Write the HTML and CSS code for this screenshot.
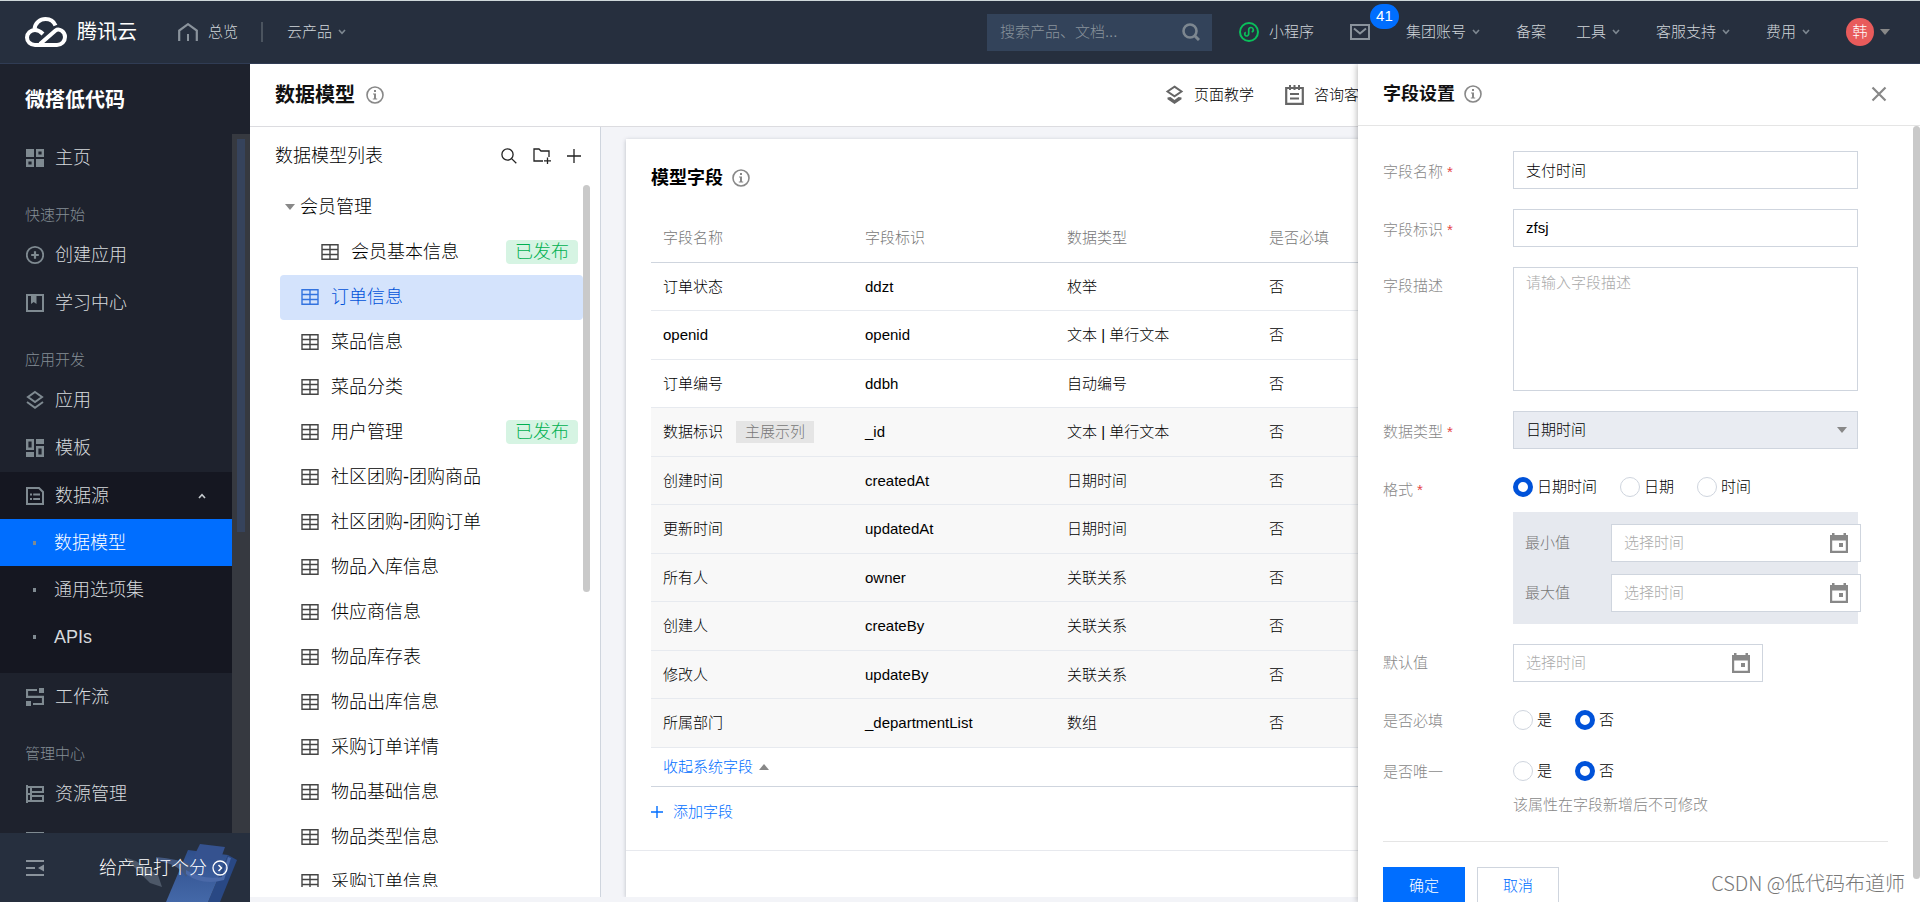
FILE: index.html
```html
<!DOCTYPE html>
<html lang="zh-CN">
<head>
<meta charset="utf-8">
<title>数据模型</title>
<link rel="stylesheet" href="styles.css">
</head>
<body>
<svg class="sprite" aria-hidden="true">
  <symbol id="i-table" viewBox="0 0 18 16"><path d="M1 .8h16v14.4H1zM1 5.5h16M1 10.5h16M9 .8v14.4" fill="none" stroke="currentColor" stroke-width="1.4"/></symbol>
  <symbol id="i-info" viewBox="0 0 18 18"><circle cx="9" cy="9" r="8" fill="none" stroke="currentColor" stroke-width="1.6"/><path d="M8 4h2v2H8zM7 7.4h3v5h1.2v1.2H6.8v-1.2H8V8.6H7z" fill="currentColor"/></symbol>
  <symbol id="i-chev" viewBox="0 0 8 6"><path d="M1 1l3 3.4L7 1" fill="none" stroke="currentColor" stroke-width="1.6"/></symbol>
  <symbol id="i-calendar" viewBox="0 0 18 20"><path d="M0 2h2V0h2.500v2h9V0H16v2h2v18H0zM2.200 7.500v10.300h13.600V7.500z" fill="currentColor" fill-rule="evenodd"/><path d="M9 10h4v4H9z" fill="currentColor"/></symbol>
  <symbol id="i-layers" viewBox="0 0 18 20"><path d="M9 2l7 5-7 5-7-5z" fill="none" stroke="currentColor" stroke-width="2"/><path d="M1 12l8 5.800L17 12" fill="none" stroke="currentColor" stroke-width="2"/></symbol>
</svg>

<div class="app">
  <header class="topbar">
    <a class="brand" href="#">
      <svg class="brand-mark" viewBox="0 0 42 30" aria-hidden="true"><g fill="none" stroke="#fff" stroke-width="4"><path d="M15 27l15.500-13.500C34 10.800 40 14.500 40 20c0 4.500-3.500 8-8 8H10c-4.500 0-8-3.300-8-7.500S5.500 13 10 13c3 0 5 1 8 4"/><path d="M9.500 12C10 6 15 2 20.500 2c5 0 8.500 2.800 10 6.500"/></g></svg>
      <span>腾讯云</span>
    </a>
    <a class="top-home" href="#">
      <svg width="20" height="18" viewBox="0 0 20 18" aria-hidden="true"><path d="M1.200 18V7.500L10 1.200l8.800 6.300V18" fill="none" stroke="#8a939c" stroke-width="2.200"/><path d="M9 11h2v7H9z" fill="#8a939c"/></svg>
      <span>总览</span>
    </a>
    <span class="top-rule"></span>
    <button class="top-link" type="button">云产品<svg class="chev"><use href="#i-chev"/></svg></button>
    <form class="search">
      <input type="text" placeholder="搜索产品、文档..." aria-label="搜索产品、文档">
      <button type="button" aria-label="搜索"><svg width="18" height="18" viewBox="0 0 18 18"><circle cx="8" cy="8" r="6.500" fill="none" stroke="currentColor" stroke-width="2.600"/><path d="M12.500 12.500L17 17" stroke="currentColor" stroke-width="3"/></svg></button>
    </form>
    <a class="top-link top-mini" href="#">
      <svg width="20" height="20" viewBox="0 0 20 20" aria-hidden="true"><circle cx="10" cy="10" r="9" fill="none" stroke="#0abf5b" stroke-width="2"/><path d="M6.800 10.200a2 2 0 1 0 2.900 2V7.800a2.300 2.300 0 1 1 3 2.200" fill="none" stroke="#0abf5b" stroke-width="1.700"/></svg>
      <span>小程序</span>
    </a>
    <a class="top-link mail" href="#" aria-label="消息">
      <svg width="20" height="16" viewBox="0 0 20 16" aria-hidden="true"><path d="M1 1h18v14H1z" fill="none" stroke="#8a939c" stroke-width="2"/><path d="M4 4.500l6 5 6-5" fill="none" stroke="#8a939c" stroke-width="2"/></svg>
      <span class="mail-badge">41</span>
    </a>
    <button class="top-link" type="button">集团账号<svg class="chev"><use href="#i-chev"/></svg></button>
    <a class="top-link" href="#">备案</a>
    <button class="top-link top-tools" type="button">工具<svg class="chev"><use href="#i-chev"/></svg></button>
    <button class="top-link" type="button">客服支持<svg class="chev"><use href="#i-chev"/></svg></button>
    <button class="top-link" type="button">费用<svg class="chev"><use href="#i-chev"/></svg></button>
    <button class="top-link account" type="button"><span class="avatar">韩</span><span class="tri-down"></span></button>
  </header>

  <aside class="sidebar">
    <h2 class="side-title">微搭低代码</h2>
    <div class="side-scroll">
      <nav class="side-nav">
        <a class="side-item" href="#"><svg viewBox="0 0 18 18"><path d="M0 0h8v8H0zM10 10h8v8h-8z" fill="currentColor"/><path d="M11.200 1.200h5.600v5.600h-5.600zM1.200 11.200h5.600v5.600H1.200z" fill="none" stroke="currentColor" stroke-width="2.400"/></svg>主页</a>
        <h3 class="side-label">快速开始</h3>
        <a class="side-item" href="#"><svg viewBox="0 0 18 18"><circle cx="9" cy="9" r="8.200" fill="none" stroke="currentColor" stroke-width="1.800"/><path d="M9 5.200v7.600M5.200 9h7.600" stroke="currentColor" stroke-width="2.200"/></svg>创建应用</a>
        <a class="side-item" href="#"><svg viewBox="0 0 18 18"><path d="M1 1h16v16H1z" fill="none" stroke="currentColor" stroke-width="2"/><path d="M5 2h5.500v8L7.700 8 5 10z" fill="currentColor"/></svg>学习中心</a>
        <h3 class="side-label">应用开发</h3>
        <a class="side-item" href="#"><svg viewBox="0 0 18 20"><use href="#i-layers"/></svg>应用</a>
        <a class="side-item" href="#"><svg viewBox="0 0 18 18"><path d="M10 0h8v5h-8zM0 13h8v5H0z" fill="currentColor"/><path d="M1.200 1.200h5.600v8.600H1.200zM11.200 8.200h5.600v8.600h-5.600z" fill="none" stroke="currentColor" stroke-width="2.400"/></svg>模板</a>
        <div class="side-group">
          <button class="side-item" type="button"><svg viewBox="0 0 18 18"><path d="M1 1h12l4 4v12H1z" fill="none" stroke="currentColor" stroke-width="2"/><path d="M4 6.500h2v2H4zM7.200 6.500H14v2H7.200zM4 11h2v2H4zM7.200 11H14v2H7.200z" fill="currentColor"/></svg>数据源<svg class="chev chev-up"><use href="#i-chev"/></svg></button>
          <a class="sub-item current" href="#">数据模型</a>
          <a class="sub-item" href="#">通用选项集</a>
          <a class="sub-item" href="#">APIs</a>
        </div>
        <a class="side-item" href="#"><svg viewBox="0 0 18 18"><path d="M13 0h5v5h-5zM0 13h5v5H0z" fill="currentColor"/><path d="M11 2H1v6.800h16V16H7" fill="none" stroke="currentColor" stroke-width="2.200"/></svg>工作流</a>
        <h3 class="side-label">管理中心</h3>
        <a class="side-item" href="#"><svg viewBox="0 0 18 18"><path d="M1 0v18M1 2h5M1 9h5M1 16h5M5 2h12v5H5zM5 11h12v5H5z" fill="none" stroke="currentColor" stroke-width="2"/></svg>资源管理</a>
        <a class="side-item" href="#" aria-label="更多"><svg viewBox="0 0 18 18"><path d="M0 0h18v18H0z" fill="none" stroke="currentColor" stroke-width="3"/></svg></a>
      </nav>
      <div class="side-bar"><div class="side-thumb"></div></div>
    </div>
    <div class="side-foot">
      <button class="collapse" type="button" aria-label="收起菜单"><svg width="18" height="16" viewBox="0 0 18 16"><path d="M0 1h18M0 8h9M0 15h18" stroke="currentColor" stroke-width="2"/><path d="M18 4.500v7L12 8z" fill="currentColor"/></svg></button>
      <a class="rate" href="#"><span>给产品打个分</span><svg width="16" height="16" viewBox="0 0 16 16" aria-hidden="true"><circle cx="8" cy="8" r="7" fill="none" stroke="#fff" stroke-width="1.300"/><path d="M6.500 5l3 3-3 3" fill="none" stroke="#fff" stroke-width="1.500"/></svg></a>
      <svg class="foot-art" viewBox="0 0 120 58" aria-hidden="true">
        <defs><linearGradient id="board" x1="0" y1="0" x2="0" y2="1"><stop offset="0" stop-color="#2f4f8c"/><stop offset="1" stop-color="#4468a8"/></linearGradient></defs>
        <path d="M3 14l9 3 22 14 4 12-12-4L8 21z" fill="#4d5868"/>
        <path d="M104 11l9 5-17 42H84z" fill="#294884"/>
        <path d="M64 6l40 5-20 47H42z" fill="url(#board)"/>
        <path d="M32 13q22 2 36 8l-6 12q-8-14-30-16z" fill="#43587f"/>
        <path d="M62 26q16 10 36 7l6-20 3 1-7 22q-22 6-38-6z" fill="#4a69a8"/>
        <path d="M76 0l25 3-5 14-27-3z" fill="#35528f"/>
      </svg>
    </div>
  </aside>

  <main class="main">
    <header class="page-head">
      <h1>数据模型</h1>
      <svg class="info"><use href="#i-info"/></svg>
      <nav class="page-links">
        <a href="#"><svg width="19" height="20" viewBox="0 0 18 20" aria-hidden="true"><path d="M9 1.600l7 4.900-7 4.900-7-4.900z" fill="none" stroke="currentColor" stroke-width="2"/><path d="M2 12.500l3-.5 4 3 4-3 3 .5v1.700L9 19l-7-4.800z" fill="currentColor"/></svg>页面教学</a>
        <a href="#"><svg width="19" height="20" viewBox="0 0 19 20" aria-hidden="true"><path d="M1.200 3h16.600v15.800H1.200z" fill="none" stroke="currentColor" stroke-width="2.200"/><path d="M5 0v5M9.500 0v5M14 0v5M5 9h9M5 13.500h9" stroke="currentColor" stroke-width="2"/></svg>咨询客服</a>
      </nav>
    </header>

    <div class="workspace">
      <section class="models">
        <header class="models-head">
          <h2>数据模型列表</h2>
          <button type="button" aria-label="搜索模型"><svg width="16" height="16" viewBox="0 0 16 16"><circle cx="6.500" cy="6.500" r="5.600" fill="none" stroke="currentColor" stroke-width="1.300"/><path d="M10.600 10.600L15.300 15.300" stroke="currentColor" stroke-width="1.300"/></svg></button>
          <button type="button" aria-label="新建文件夹"><svg width="18" height="16" viewBox="0 0 18 16"><path d="M10 13H1V1h5l2 2h8v6M11 12.800h7M14.500 9.500V16" fill="none" stroke="currentColor" stroke-width="1.300"/></svg></button>
          <button type="button" aria-label="新建模型"><svg width="14" height="14" viewBox="0 0 14 14"><path d="M7 0v14M0 7h14" stroke="currentColor" stroke-width="1.300"/></svg></button>
        </header>
        <div class="tree-wrap">
          <ul class="tree">
            <li class="folder"><span class="tri-down"></span>会员管理</li>
            <li class="nested"><svg><use href="#i-table"/></svg>会员基本信息<span class="tag">已发布</span></li>
            <li class="selected"><svg><use href="#i-table"/></svg>订单信息</li>
            <li><svg><use href="#i-table"/></svg>菜品信息</li>
            <li><svg><use href="#i-table"/></svg>菜品分类</li>
            <li><svg><use href="#i-table"/></svg>用户管理<span class="tag">已发布</span></li>
            <li><svg><use href="#i-table"/></svg>社区团购-团购商品</li>
            <li><svg><use href="#i-table"/></svg>社区团购-团购订单</li>
            <li><svg><use href="#i-table"/></svg>物品入库信息</li>
            <li><svg><use href="#i-table"/></svg>供应商信息</li>
            <li><svg><use href="#i-table"/></svg>物品库存表</li>
            <li><svg><use href="#i-table"/></svg>物品出库信息</li>
            <li><svg><use href="#i-table"/></svg>采购订单详情</li>
            <li><svg><use href="#i-table"/></svg>物品基础信息</li>
            <li><svg><use href="#i-table"/></svg>物品类型信息</li>
            <li><svg><use href="#i-table"/></svg>采购订单信息</li>
          </ul>
          <div class="tree-thumb"></div>
        </div>
      </section>

      <section class="content">
        <div class="card">
          <div class="card-body">
            <div class="card-title"><h2>模型字段</h2><svg class="info"><use href="#i-info"/></svg></div>
            <table class="fields">
              <colgroup><col class="col"><col class="col"><col class="col"><col class="col"><col></colgroup>
              <thead><tr><th>字段名称</th><th>字段标识</th><th>数据类型</th><th>是否必填</th><th></th></tr></thead>
              <tbody>
                <tr><td>订单状态</td><td>ddzt</td><td>枚举</td><td>否</td><td></td></tr>
                <tr><td>openid</td><td>openid</td><td>文本 | 单行文本</td><td>否</td><td></td></tr>
                <tr><td>订单编号</td><td>ddbh</td><td>自动编号</td><td>否</td><td></td></tr>
                <tr class="sys"><td>数据标识<span class="main-tag">主展示列</span></td><td>_id</td><td>文本 | 单行文本</td><td>否</td><td></td></tr>
                <tr class="sys"><td>创建时间</td><td>createdAt</td><td>日期时间</td><td>否</td><td></td></tr>
                <tr class="sys"><td>更新时间</td><td>updatedAt</td><td>日期时间</td><td>否</td><td></td></tr>
                <tr class="sys"><td>所有人</td><td>owner</td><td>关联关系</td><td>否</td><td></td></tr>
                <tr class="sys"><td>创建人</td><td>createBy</td><td>关联关系</td><td>否</td><td></td></tr>
                <tr class="sys"><td>修改人</td><td>updateBy</td><td>关联关系</td><td>否</td><td></td></tr>
                <tr class="sys"><td>所属部门</td><td>_departmentList</td><td>数组</td><td>否</td><td></td></tr>
              </tbody>
            </table>
            <div class="fold"><button class="text-btn" type="button">收起系统字段<span class="tri-up"></span></button></div>
            <div class="add"><button class="text-btn" type="button"><svg width="12" height="12" viewBox="0 0 12 12"><path d="M6 0v12M0 6h12" stroke="currentColor" stroke-width="1.400"/></svg>添加字段</button></div>
          </div>
        </div>
      </section>
    </div>

    <aside class="drawer">
      <header class="drawer-head">
        <h2>字段设置</h2><svg class="info"><use href="#i-info"/></svg>
        <button type="button" aria-label="关闭"><svg width="16" height="16" viewBox="0 0 16 16"><path d="M1.500 1.500l13 13M14.500 1.500l-13 13" stroke="currentColor" stroke-width="2.200"/></svg></button>
      </header>
      <div class="drawer-body">
        <form class="form">
          <div class="row"><label class="required" for="f-name">字段名称</label><input class="box" id="f-name" type="text" value="支付时间"></div>
          <div class="row"><label class="required" for="f-key">字段标识</label><input class="box" id="f-key" type="text" value="zfsj"></div>
          <div class="row"><label for="f-desc">字段描述</label><textarea class="box" id="f-desc" placeholder="请输入字段描述"></textarea></div>
          <div class="row"><label class="required" for="f-type">数据类型</label><div class="select-box"><select id="f-type"><option>日期时间</option></select><span class="tri-down"></span></div></div>
          <fieldset class="row"><legend class="required">格式</legend>
            <div>
              <div class="choices choices-wide">
                <label><input type="radio" name="fmt" checked>日期时间</label>
                <label><input type="radio" name="fmt">日期</label>
                <label><input type="radio" name="fmt">时间</label>
              </div>
              <div class="range">
                <label for="f-min">最小值</label><div class="date"><input id="f-min" type="text" placeholder="选择时间"><svg><use href="#i-calendar"/></svg></div>
                <label for="f-max">最大值</label><div class="date"><input id="f-max" type="text" placeholder="选择时间"><svg><use href="#i-calendar"/></svg></div>
              </div>
            </div>
          </fieldset>
          <div class="row"><label for="f-def">默认值</label><div class="date"><input id="f-def" type="text" placeholder="选择时间"><svg><use href="#i-calendar"/></svg></div></div>
          <fieldset class="row"><legend>是否必填</legend>
            <div class="choices"><label><input type="radio" name="req">是</label><label><input type="radio" name="req" checked>否</label></div>
          </fieldset>
          <fieldset class="row row-close"><legend>是否唯一</legend>
            <div>
              <div class="choices"><label><input type="radio" name="uniq">是</label><label><input type="radio" name="uniq" checked>否</label></div>
              <p class="hint">该属性在字段新增后不可修改</p>
            </div>
          </fieldset>
          <div class="actions"><button class="primary" type="button">确定</button><button type="button">取消</button></div>
        </form>
        <div class="drawer-thumb"></div>
      </div>
    </aside>
  </main>
  <div class="watermark">CSDN @低代码布道师</div>
</div>
</body>
</html>
```
FILE: styles.css
```css
* { box-sizing: border-box; }
body {
  margin: 0;
  font: 300 15px/20px "Liberation Sans", "Noto Sans CJK SC", sans-serif;
  color: #000;
}
h1, h2, h3, p, ul, fieldset { margin: 0; padding: 0; border: 0; min-width: 0; }
ul { list-style: none; }
a { color: inherit; text-decoration: none; }
button, input, textarea, select { font: inherit; color: inherit; border-radius: 0; }
button { border: 0; padding: 0; background: none; }
svg { display: block; flex: none; }
.sprite { position: absolute; width: 0; height: 0; }

.app {
  position: relative;
  display: grid;
  grid-template: 64px minmax(0, 1fr) / 250px minmax(0, 1fr);
  height: 100vh;
  overflow: hidden;
}

.info { width: 18px; height: 18px; color: #888; }
.chev { width: 8px; height: 6px; color: #7d8790; }
.tri-down, .tri-up { flex: none; width: 10px; height: 6px; background: #888; }
.tri-down { clip-path: polygon(0 0, 100% 0, 50% 100%); }
.tri-up { clip-path: polygon(0 100%, 100% 100%, 50% 0); }

/* Top bar */
.topbar {
  grid-column: 1 / -1;
  display: flex;
  align-items: center;
  padding: 0 30px 0 25px;
  background: #262f3e;
  border-top: 1px solid #cfd8da;
  border-bottom: 1px solid #303c54;
  color: #d0d5da;
}
.brand { display: flex; align-items: center; gap: 10px; color: #fff; font-size: 20px; font-weight: 400; }
.brand-mark { width: 42px; height: 30px; }
.top-home { display: flex; align-items: center; gap: 10px; margin-left: 41px; }
.top-rule { width: 2px; height: 20px; margin: 0 -12px 0 23px; background: #4b545f; }
.top-link { display: flex; align-items: center; gap: 6px; margin-left: 36px; white-space: nowrap; }
.search { display: flex; align-items: center; width: 225px; height: 37px; margin-left: auto; padding: 0 12px 0 13px; background: #33435a; color: #7d8790; }
.search input { flex: 1; min-width: 0; border: 0; padding: 0; background: none; outline: 0; }
.search input::placeholder { color: #89939c; }
.top-mini { gap: 10px; margin-left: 27px; }
.mail { position: relative; }
.mail-badge {
  position: absolute;
  left: 20px;
  bottom: 11px;
  width: 29px;
  padding: 2px 0 3px;
  border-radius: 13px;
  background: #006eff;
  color: #fff;
  text-align: center;
}
.top-tools { margin-left: 30px; }
.avatar { width: 28px; border-radius: 50%; background: #e85b5b; color: #fff; line-height: 28px; }

/* Sidebar */
.sidebar { display: flex; flex-direction: column; min-height: 0; background: #1e222d; color: #d6dadd; font-size: 18px; }
.side-title { padding: 21px 25px 19px; color: #fff; font-size: 20px; line-height: 30px; font-weight: 700; }
.side-scroll { flex: 1; display: flex; min-height: 0; overflow: hidden; }
.side-nav { flex: 1; }
.side-item { display: flex; align-items: center; gap: 11px; width: 100%; height: 48px; padding: 0 26px; }
.side-item svg { width: 18px; height: 20px; color: #7f8a91; }
.side-item .chev-up { width: 8px; height: 6px; margin-left: auto; color: #c5cace; transform: rotate(180deg); }
.side-label { padding: 16px 25px 0; height: 49px; color: #858f96; font-size: 15px; line-height: 33px; font-weight: 300; }
.side-group { padding-bottom: 13px; background: #151721; }
.side-group .side-item { height: 47px; }
.sub-item { display: flex; align-items: center; gap: 18px; height: 47px; padding-left: 33px; }
.sub-item::before { content: ""; width: 3px; height: 4px; background: #7f8a91; }
.sub-item.current { background: #006eff; color: #fff; }
.side-bar { width: 18px; padding: 5px; background: #363940; }
.side-thumb { width: 8px; height: 57%; background: #36435c; }
.side-foot { position: relative; display: flex; align-items: center; justify-content: space-between; height: 69px; padding: 0 22px 0 26px; background: #262f3e; }
.collapse { color: #8a939c; }
.rate { position: relative; z-index: 1; display: flex; align-items: center; gap: 5px; color: #fff; }
.foot-art { position: absolute; right: 6px; bottom: 0; width: 120px; height: 58px; }

/* Page */
.main { position: relative; display: flex; flex-direction: column; min-width: 0; min-height: 0; background: #f3f4f8; }
.page-head { display: flex; align-items: center; height: 63px; padding: 0 546px 0 25px; background: #fff; border-bottom: 1px solid #dcdce0; }
.page-head h1 { margin-right: 11px; font-size: 20px; font-weight: 700; color: #111; }
.page-links { display: flex; gap: 31px; margin-left: auto; white-space: nowrap; }
.page-links a { display: flex; align-items: center; gap: 10px; }
.page-links svg { color: #666; }
.workspace { flex: 1; display: flex; min-height: 0; padding-bottom: 5px; }

.models { display: flex; flex-direction: column; width: 351px; min-height: 0; padding-bottom: 10px; background: #fff; border-right: 1px solid #cfd5de; font-size: 18px; }
.models-head { display: flex; align-items: center; gap: 16px; height: 58px; padding: 0 19px 0 25px; }
.models-head h2 { margin-right: auto; font-size: 18px; font-weight: 300; }
.models-head button { color: #222; }
.tree-wrap { position: relative; flex: 1; min-height: 0; overflow: hidden; padding: 0 17px 0 30px; }
.tree li { display: flex; align-items: center; gap: 12px; height: 45px; padding: 0 5px 1px 21px; border-radius: 4px; white-space: nowrap; }
.tree svg { width: 18px; height: 16px; color: #444; }
.tree .folder { gap: 5px; padding-left: 5px; }
.tree .nested { padding-left: 41px; }
.tree .selected { background: #d4e3fc; color: #0052d9; }
.tree .selected svg { color: #3373df; }
.tag { margin-left: auto; padding: 0 9px; border-radius: 4px; background: #d6f4e3; color: #00b050; line-height: 24px; }
.tree-thumb { position: absolute; top: 0; right: 10px; width: 7px; height: 58%; border-radius: 4px; background: #c9c9c9; }

.content { flex: 1; display: flex; min-width: 0; padding: 12px 25px 0; overflow: hidden; }
.card { flex: 1; min-width: 0; background: #fff; box-shadow: 0 1px 4px rgba(54, 58, 80, .3); }
.card-body { padding: 25px; border-bottom: 1px solid #e7e9ee; }
.card-title { display: flex; align-items: center; gap: 9px; height: 27px; }
.card-title h2 { font-size: 18px; font-weight: 700; }
.fields { width: 100%; margin-top: 22px; table-layout: fixed; border-collapse: separate; border-spacing: 0; }
.fields .col { width: 202px; }
.fields th, .fields td { padding: 0 12px; text-align: left; font-weight: 300; white-space: nowrap; }
.fields th { height: 50px; color: #777; border-bottom: 1px solid #cfd5de; }
.fields td { height: 49px; border-bottom: 1px solid #e7eaef; }
.fields tr:nth-child(odd) td { height: 48px; }
.fields .sys { background: #f8f8f8; }
.main-tag { display: inline-block; margin-left: 13px; padding: 0 9px; background: #e5e5e5; color: #777; line-height: 22px; }
.fold { display: flex; align-items: center; height: 39px; padding-left: 12px; border-bottom: 1px solid #cfd5de; }
.add { display: flex; align-items: center; height: 38px; margin-top: 6px; margin-bottom: -6px; }
.text-btn { display: flex; align-items: center; gap: 6px; color: #006eff; }
.add .text-btn { gap: 10px; }

/* Drawer over the page */
.drawer { position: absolute; top: 0; right: 0; bottom: 0; display: flex; flex-direction: column; width: 562px; background: #fff; box-shadow: 0 0 7px rgba(0, 0, 0, .35); clip-path: inset(0 0 0 -10px); }
.drawer-head { display: flex; align-items: center; height: 62px; padding: 0 33px 2px 25px; border-bottom: 1px solid #e5e5e5; }
.drawer-head h2 { margin-right: 9px; font-size: 18px; font-weight: 700; color: #111; }
.drawer-head button { margin-left: auto; color: #888; }
.drawer-body { position: relative; flex: 1; min-height: 0; overflow: hidden; padding: 25px 32px 0 25px; }
.drawer-thumb { position: absolute; top: 0; right: 0; width: 7px; height: 97%; border-radius: 4px; background: #c9c9c9; }
.row { display: grid; grid-template-columns: 130px minmax(0, 345px); align-items: start; margin-bottom: 20px; }
.row > label, .row > legend { float: left; padding: 0; color: #888; line-height: 38px; }
.row > .required { padding-top: 2px; margin-bottom: -2px; }
.required::after { content: "*"; margin-left: 4px; color: #e54545; }
fieldset.row { display: flex; }
fieldset.row > legend { width: 130px; flex: none; }
fieldset.row > div { flex: 0 1 345px; min-width: 0; }
.row-close { margin-top: -7px; }
.box { width: 100%; height: 38px; padding: 0 12px 2px; border: 1px solid #cfd5de; background: #fff; outline: 0; }
textarea.box { display: block; height: 124px; padding-top: 5px; resize: none; }
::placeholder { color: #aaa; opacity: 1; }
.select-box { display: flex; align-items: center; height: 38px; padding: 0 10px 0 12px; border: 1px solid #cfd5de; background: #e9ecf2; }
.select-box select { flex: 1; border: 0; padding: 0; background: none; appearance: none; outline: 0; }
.choices { display: flex; align-items: center; gap: 23px; height: 36px; }
.choices label { display: flex; align-items: center; gap: 4px; }
.choices input { appearance: none; width: 20px; height: 20px; margin: 0; border: 1px solid #cfd5de; border-radius: 50%; background: #fff; }
.choices input:checked { border: 5px solid #0052d9; }
.range { display: grid; grid-template-columns: 86px 250px; gap: 12px 0; margin-top: 7px; padding: 12px 0 12px 12px; background: #e6e9ef; color: #777; line-height: 38px; }
.date { display: flex; align-items: center; width: 250px; height: 38px; padding: 0 12px; border: 1px solid #cfd5de; background: #fff; }
.date input { flex: 1; min-width: 0; border: 0; padding: 0; background: none; outline: 0; }
.date svg { width: 18px; height: 20px; color: #888; }
.hint { margin-top: 4px; color: #888; line-height: 24px; }
.actions { display: flex; gap: 12px; margin-top: 24px; padding-top: 25px; border-top: 1px solid #e5e5e5; }
.actions button { width: 82px; height: 38px; border: 1px solid #cfd5de; background: #fff; color: #006eff; }
.actions .primary { border-color: #006eff; background: #006eff; color: #fff; }
.watermark { position: absolute; right: 15px; bottom: 6px; color: #777; font: 300 20px/26px "Noto Sans CJK SC", sans-serif; text-shadow: 1px 1px 0 #fff; pointer-events: none; }
```
